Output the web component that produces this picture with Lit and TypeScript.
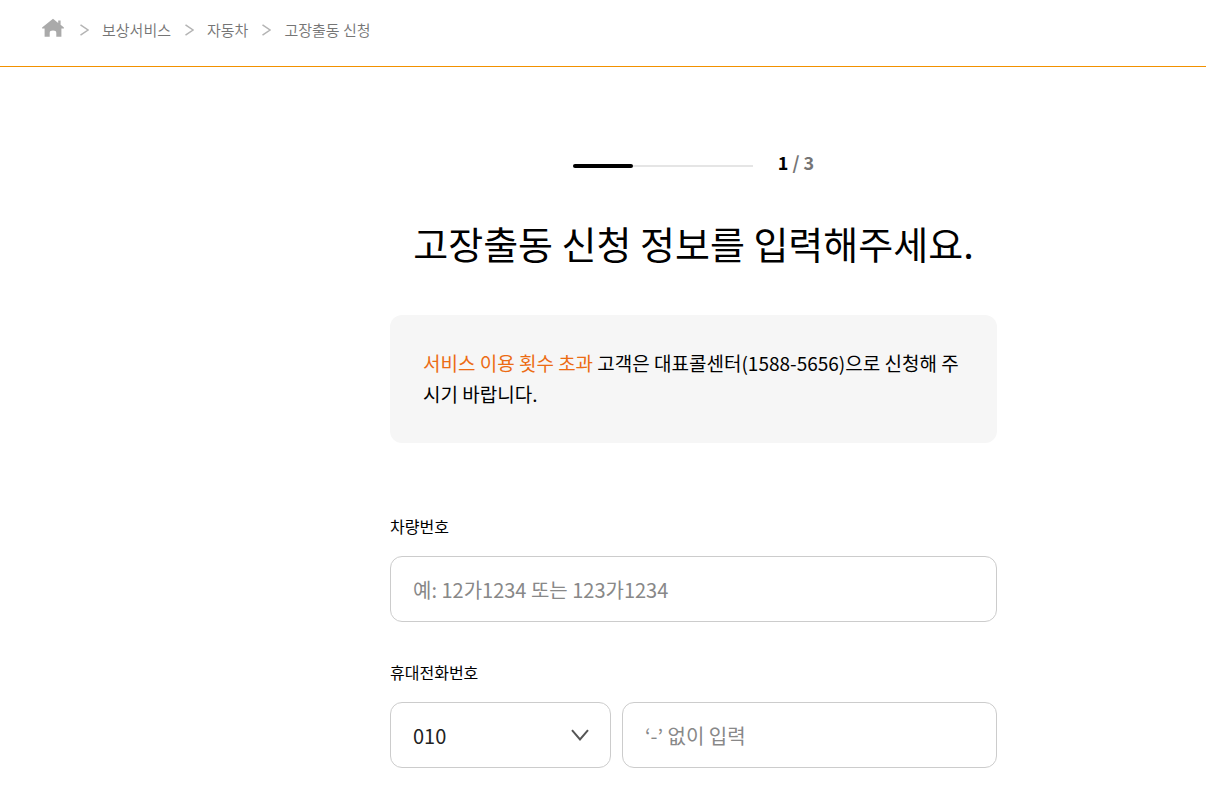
import { LitElement, html, css } from "lit";
import { customElement, state } from "lit/decorators.js";

const separator = html`
  <svg class="sep" viewBox="0 0 10 14" width="10" height="14" aria-hidden="true">
    <path d="M1.5 1.8 9 7 1.5 12.2" fill="none" stroke="#b4b4b4" stroke-width="1.5" />
  </svg>
`;

@customElement("app-root")
export class AppRoot extends LitElement {
  static styles = css`
    :host {
      display: block;
      color: #000;
      background: #fff;
      font-family: "Noto Sans CJK KR", "Noto Sans", sans-serif;
      font-size: 16px;
    }
    * {
      box-sizing: border-box;
    }
    .top {
      border-bottom: 1px solid #f29100;
      padding: 18px 42px 24px;
    }
    .crumbs {
      display: flex;
      align-items: center;
      list-style: none;
      margin: 0;
      padding: 0;
      font-size: 15px;
      line-height: 24px;
      font-weight: 350;
      color: #757575;
    }
    .crumb {
      display: flex;
      align-items: center;
    }
    .crumb a {
      color: inherit;
      text-decoration: none;
    }
    .home,
    .sep {
      display: block;
    }
    .home {
      margin-bottom: 4px;
    }
    .sep {
      margin: 0 13px;
    }
    .main {
      padding: 79px 209px 27px 390px;
    }
    .progress {
      display: flex;
      align-items: center;
      justify-content: center;
      gap: 25px;
    }
    .track {
      display: flex;
      align-items: center;
      width: 180px;
      height: 4px;
      background: linear-gradient(#e5e5e5, #e5e5e5) center / 100% 2px no-repeat;
    }
    .fill {
      height: 4px;
      border-radius: 2px;
      background: #000;
    }
    .count {
      padding-bottom: 8px;
      font-size: 18px;
      line-height: 32px;
      font-weight: 700;
      color: #757575;
    }
    .count b {
      font-weight: 700;
      color: #000;
    }
    .title {
      margin: 27px 0 42px;
      text-align: center;
      font-size: 38px;
      line-height: 60px;
      font-weight: 400;
    }
    .notice {
      margin: 0 0 67px;
      padding: 32px 33px 34px;
      border-radius: 12px;
      background: #f6f6f6;
      font-size: 19px;
      line-height: 31px;
      word-break: break-all;
    }
    .notice em {
      font-style: normal;
      color: #ec6c14;
    }
    .field {
      margin: 0 0 34px;
    }
    .field:last-child {
      margin: 0;
    }
    .label {
      display: block;
      margin-bottom: 14px;
      font-size: 16px;
      line-height: 32px;
    }
    .row {
      display: flex;
      gap: 11px;
    }
    .prefix {
      display: grid;
      flex: 221 1 0;
      align-items: center;
    }
    .number {
      flex: 375 1 0;
      min-width: 0;
    }
    .control {
      width: 100%;
      height: 66px;
      margin: 0;
      padding: 0 22px;
      border: 1px solid #ccc;
      border-radius: 12px;
      background: #fff;
      color: #222;
      font-family: inherit;
      font-size: 20px;
      appearance: none;
    }
    .control::placeholder {
      color: #888;
      opacity: 1;
    }
    .prefix .control,
    .chevron {
      grid-area: 1 / 1;
    }
    .chevron {
      justify-self: end;
      margin-right: 21px;
      pointer-events: none;
    }
  `;

  @state() private step = 1;
  private readonly steps = 3;

  render() {
    return html`
      <header class="top">
        <nav aria-label="breadcrumb">
          <ol class="crumbs">
            <li class="crumb">
              <a href="#" aria-label="홈">
                <svg class="home" viewBox="0 0 24 20" width="24" height="20">
                  <path
                    d="M11 .8 .1 9.4V10.4H2.6V18.8H7.7V15Q7.7 12.6 11 12.6T14.3 15V18.8H19.4V10.4H21.9V9.4L18.6 6.8V2.6H16.2V4.9Z"
                    fill="#aaa"
                  />
                </svg>
              </a>
            </li>
            <li class="crumb">${separator}<a href="#">보상서비스</a></li>
            <li class="crumb">${separator}<a href="#">자동차</a></li>
            <li class="crumb">${separator}<a href="#" aria-current="page">고장출동 신청</a></li>
          </ol>
        </nav>
      </header>
      <main class="main">
        <div class="progress">
          <div class="track">
            <div class="fill" style="width:${(this.step / this.steps) * 100}%"></div>
          </div>
          <div class="count"><b>${this.step}</b> / ${this.steps}</div>
        </div>
        <h1 class="title">고장출동 신청 정보를 입력해주세요.</h1>
        <p class="notice">
          <em>서비스 이용 횟수 초과</em> 고객은 대표콜센터(1588-5656)으로 신청해 주시기 바랍니다.
        </p>
        <form>
          <div class="field">
            <label class="label" for="car">차량번호</label>
            <input class="control" id="car" type="text" placeholder="예: 12가1234 또는 123가1234" />
          </div>
          <div class="field">
            <label class="label" for="phone">휴대전화번호</label>
            <div class="row">
              <div class="prefix">
                <select class="control" id="prefix" aria-label="휴대전화 앞자리">
                  <option>010</option>
                  <option>011</option>
                  <option>016</option>
                  <option>017</option>
                  <option>018</option>
                  <option>019</option>
                </select>
                <svg class="chevron" viewBox="0 0 20 14" width="20" height="14" aria-hidden="true">
                  <path d="M2 2.2 10 11.4 18 2.2" fill="none" stroke="#555" stroke-width="2" />
                </svg>
              </div>
              <div class="number">
                <input class="control" id="phone" type="tel" placeholder="‘-’ 없이 입력" />
              </div>
            </div>
          </div>
        </form>
      </main>
    `;
  }
}
